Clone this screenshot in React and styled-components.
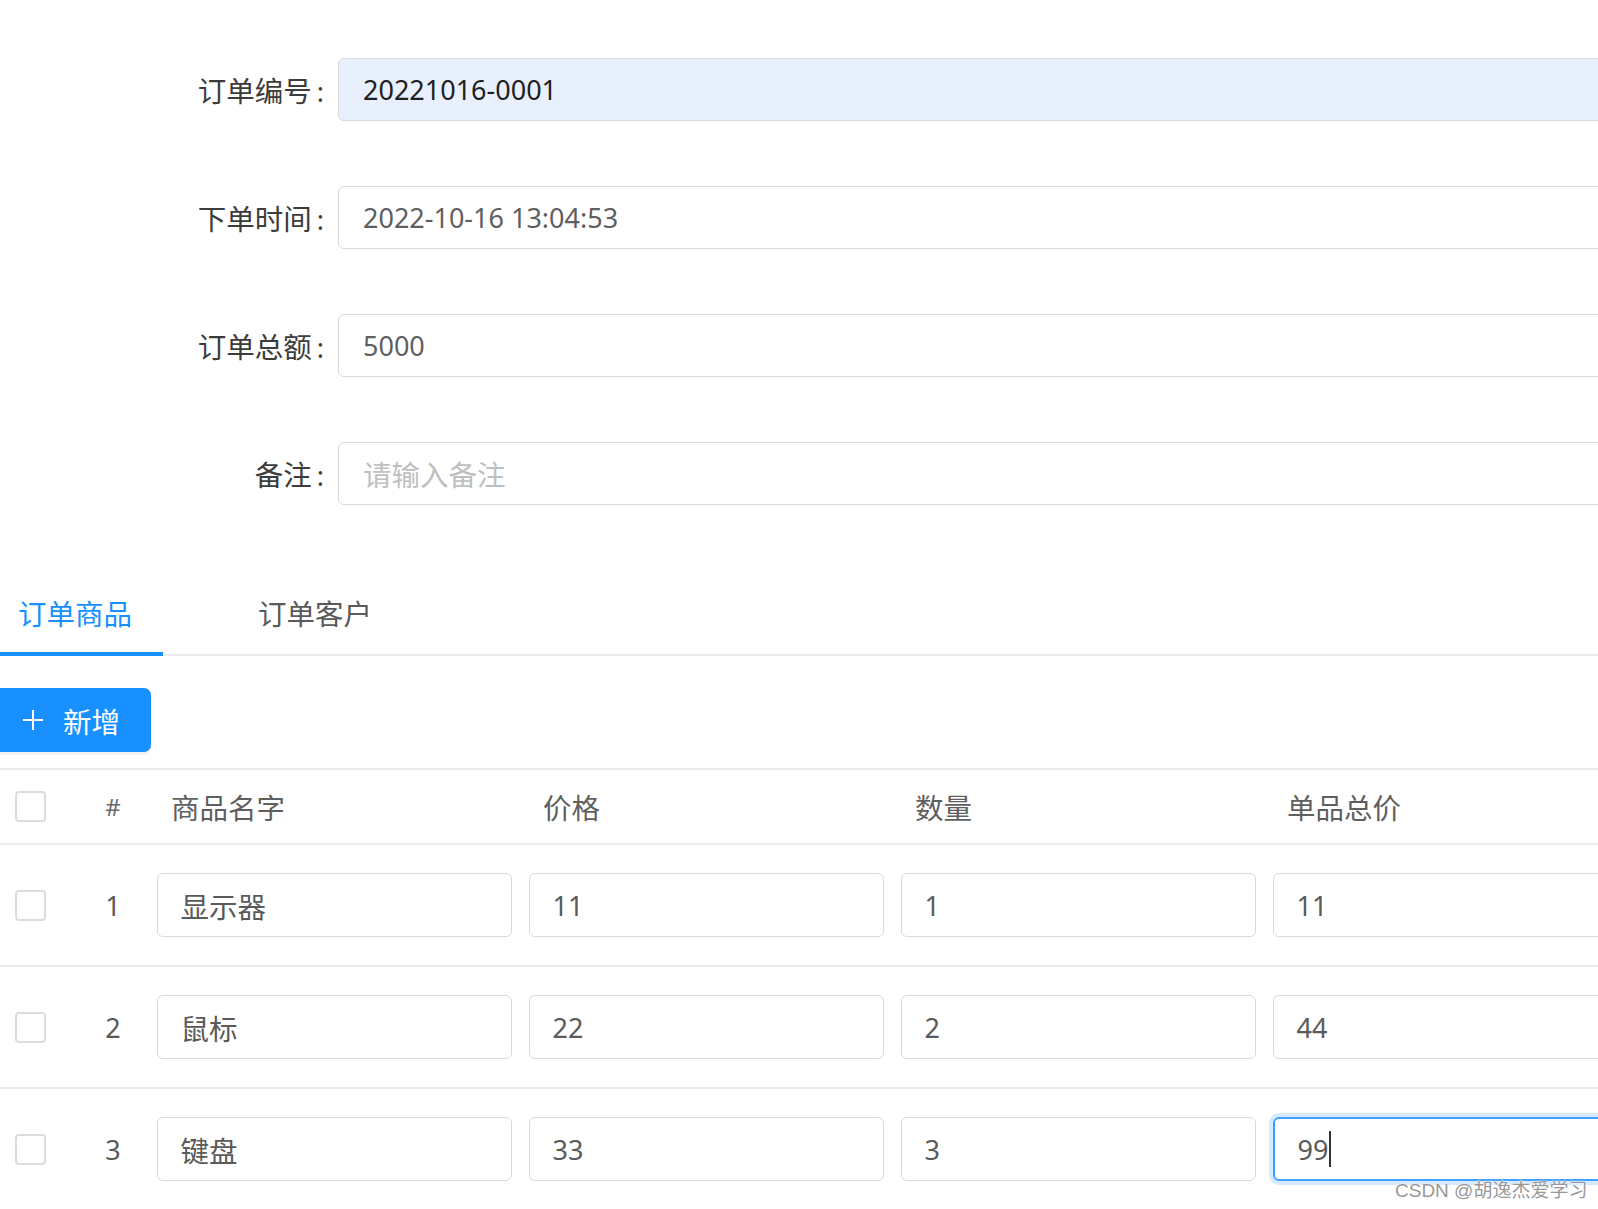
import React from 'react'
import styled, { createGlobalStyle } from 'styled-components'

const GlobalStyle = createGlobalStyle`
    html, body {
        margin: 0;
        padding: 0;
        background: #fff;
        overflow: hidden;
    }
    body {
        font-family: "Noto Sans", "Noto Sans CJK SC", sans-serif;
        font-size: 27px;
    }
`

const Page = styled.div`
    width: 1900px;
    position: relative;
`

const Form = styled.div`
    padding-top: 58px;
`

const FormItem = styled.div`
    display: flex;
    align-items: center;
    margin-bottom: 65px;
`

const Label = styled.div`
    width: 324px;
    margin-right: 14px;
    text-align: right;
    color: #3c3c3c;
    font-size: 28.5px;
    white-space: nowrap;
`

const Colon = styled.span`
    margin-left: 5px;
    font-size: 27px;
`

const Field = styled.div`
    flex: 1;
    height: 63px;
    box-sizing: border-box;
    display: flex;
    align-items: center;
    padding: 0 24px;
    border: 1.5px solid #d9d9d9;
    border-radius: 6px;
    background: ${p => (p.$filled ? '#e8f0fe' : '#fff')};
    color: ${p => (p.$placeholder ? '#bfbfbf' : p.$filled ? '#1f1f1f' : '#5f5f5f')};
    font-size: ${p => (p.$placeholder ? '28.5px' : '27px')};
    white-space: nowrap;
`

const TabNav = styled.div`
    display: flex;
    gap: 77px;
    height: 84px;
    margin-top: 6px;
    border-bottom: 2px solid #ebebeb;
`

const Tab = styled.div`
    position: relative;
    width: 163px;
    box-sizing: border-box;
    padding-left: 18px;
    display: flex;
    align-items: center;
    font-size: 28.5px;
    color: ${p => (p.$active ? '#1890ff' : '#5a5a5a')};

    &::after {
        content: '';
        display: ${p => (p.$active ? 'block' : 'none')};
        position: absolute;
        left: 0;
        right: 0;
        bottom: -2px;
        height: 4px;
        background: #1890ff;
    }
`

const Toolbar = styled.div`
    padding: 32px 0 16px;
`

const AddButton = styled.div`
    margin-left: -6px;
    width: 157px;
    height: 64px;
    box-sizing: border-box;
    padding-left: 28px;
    display: flex;
    align-items: center;
    gap: 19px;
    background: #1890ff;
    color: #fff;
    font-size: 28.5px;
    border-radius: 7px;
    box-shadow: 0 3px 0 rgba(0, 0, 0, 0.05);
`

const Table = styled.div`
    border-top: 2px solid #ebebeb;
`

const Row = styled.div`
    display: grid;
    grid-template-columns: 78px 70px repeat(4, 372px);
    align-items: center;
    height: ${p => (p.$head ? '73px' : '120px')};
    border-bottom: 2px solid #ebebeb;
    color: #5f5f5f;
`

const CheckCell = styled.div`
    padding-left: 15px;
    display: flex;
    align-items: center;
`

const Checkbox = styled.div`
    width: 31px;
    height: 31px;
    box-sizing: border-box;
    border: 2px solid #dcdcdc;
    border-radius: 4px;
    background: #fff;
`

const IndexCell = styled.div`
    text-align: center;
    color: ${p => (p.$head ? '#6a6a6a' : '#5a5a5a')};
    font-size: ${p => (p.$head ? '24px' : '27px')};
`

const HeadCell = styled.div`
    padding-left: 23px;
    color: #5f5f5f;
    font-size: 28.5px;
    white-space: nowrap;
`

const Cell = styled.div`
    padding: 0 8.5px;
`

const CellInput = styled.div`
    height: 64px;
    box-sizing: border-box;
    display: flex;
    align-items: center;
    padding: 0 23px;
    border: ${p => (p.$focused ? '2px solid #40a0ff' : '1.5px solid #d9d9d9')};
    border-radius: 6px;
    box-shadow: ${p => (p.$focused ? '0 0 0 4px rgba(64, 160, 255, 0.22)' : 'none')};
    color: #5a5a5a;
    font-size: ${p => (p.$cjk ? '28.5px' : '27px')};
    white-space: nowrap;
`

const Caret = styled.span`
    display: inline-block;
    width: 2px;
    height: 36px;
    margin-left: 1px;
    background: #333;
`

const Watermark = styled.div`
    position: absolute;
    left: 1395px;
    top: 1175px;
    font-family: "Liberation Sans", "Noto Sans CJK SC", sans-serif;
    font-size: 19px;
    color: #999;
    text-shadow: 0 0 1px #fff, 0 0 2px #fff;
    white-space: nowrap;
`

const PlusIcon = () => (
    <svg width="22" height="22" viewBox="0 0 22 22">
        <path d="M11 1v20M1 11h20" stroke="#fff" strokeWidth="2" fill="none" />
    </svg>
)

const formItems = [
    { label: '订单编号', value: '20221016-0001', filled: true },
    { label: '下单时间', value: '2022-10-16 13:04:53' },
    { label: '订单总额', value: '5000' },
    { label: '备注', value: '请输入备注', placeholder: true },
]

const columns = ['商品名字', '价格', '数量', '单品总价']

const rows = [
    ['显示器', '11', '1', '11'],
    ['鼠标', '22', '2', '44'],
    ['键盘', '33', '3', '99'],
]

const App = () => {
    return (
        <Page>
            <GlobalStyle />
            <Form>
                {formItems.map(item => (
                    <FormItem key={item.label}>
                        <Label>
                            {item.label}
                            <Colon>:</Colon>
                        </Label>
                        <Field $filled={item.filled} $placeholder={item.placeholder}>
                            {item.value}
                        </Field>
                    </FormItem>
                ))}
            </Form>
            <TabNav>
                <Tab $active>订单商品</Tab>
                <Tab>订单客户</Tab>
            </TabNav>
            <Toolbar>
                <AddButton>
                    <PlusIcon />
                    新增
                </AddButton>
            </Toolbar>
            <Table>
                <Row $head>
                    <CheckCell><Checkbox /></CheckCell>
                    <IndexCell $head>#</IndexCell>
                    {columns.map(c => (
                        <HeadCell key={c}>{c}</HeadCell>
                    ))}
                </Row>
                {rows.map((r, i) => (
                    <Row key={i}>
                        <CheckCell><Checkbox /></CheckCell>
                        <IndexCell>{i + 1}</IndexCell>
                        {r.map((v, j) => {
                            const focused = i === rows.length - 1 && j === r.length - 1
                            return (
                                <Cell key={j}>
                                    <CellInput $focused={focused} $cjk={j === 0}>
                                        {v}
                                        {focused && <Caret />}
                                    </CellInput>
                                </Cell>
                            )
                        })}
                    </Row>
                ))}
            </Table>
            <Watermark>CSDN @胡逸杰爱学习</Watermark>
        </Page>
    )
}

export default App
